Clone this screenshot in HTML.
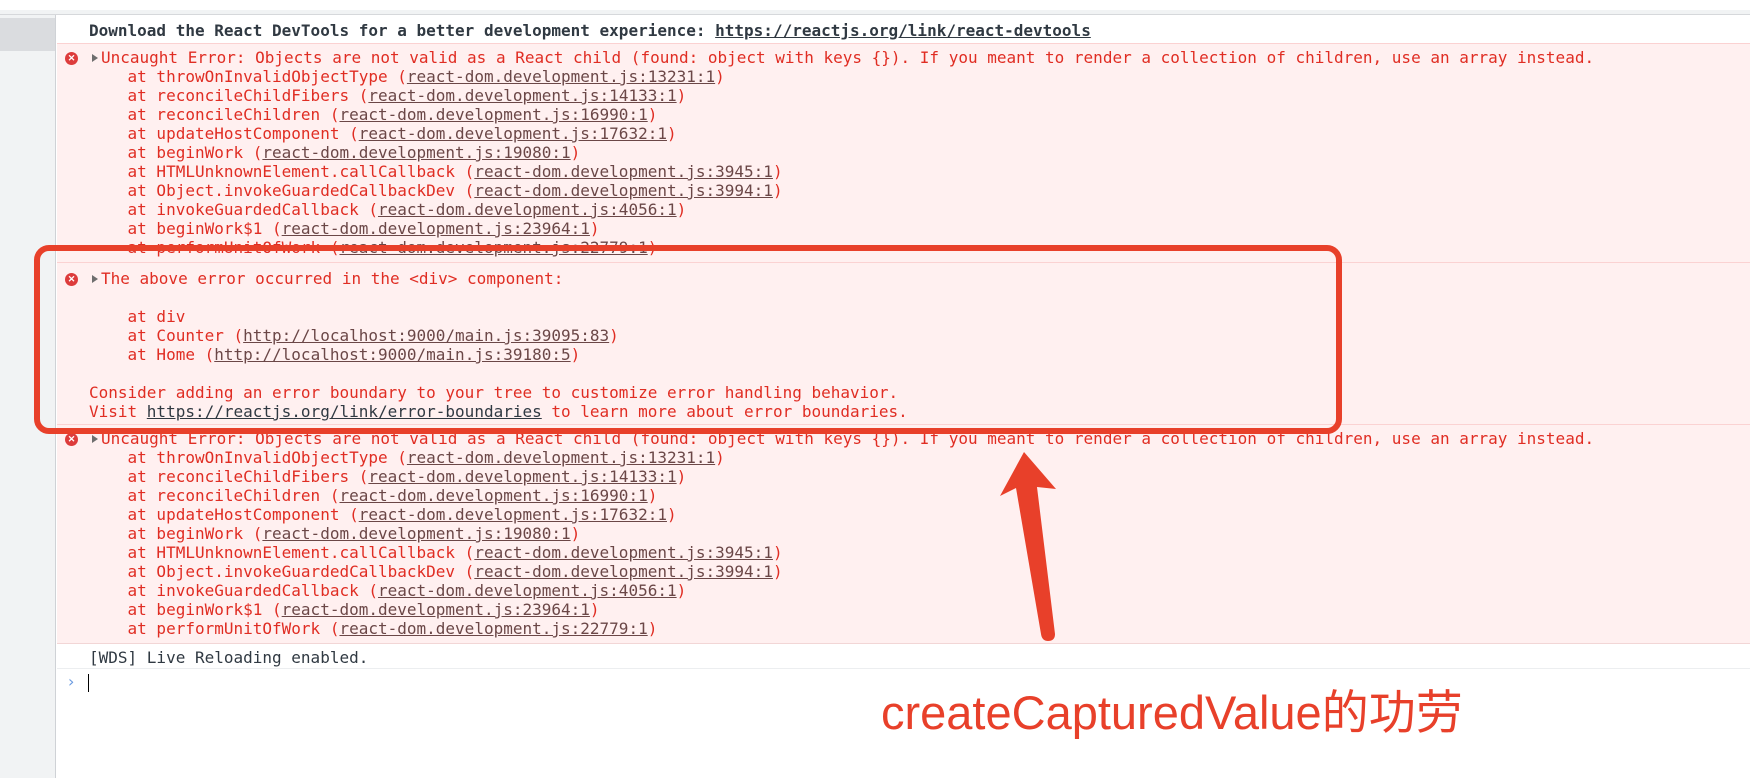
<!DOCTYPE html>
<html><head><meta charset="utf-8"><style>
*{margin:0;padding:0;box-sizing:border-box}
body{width:1750px;height:778px;overflow:hidden;background:#fff;position:relative;font-family:"DejaVu Sans Mono","Liberation Mono",monospace;font-size:16px}
.side{position:absolute;left:0;top:15px;width:56px;bottom:0;background:#f1f3f4;border-right:1px solid #cfd2d6}
.blk{position:absolute;left:0;top:3px;width:55px;height:33px;background:#dadcdf}
.topband{position:absolute;left:0;top:10px;width:1750px;height:5px;background:#f1f3f4;border-bottom:1px solid #d6d8db}
.row{position:absolute;left:57px;right:0;overflow:hidden}
.err{background:#fff0f0;border-top:1px solid #fbd2d2;color:#e02d23}
.l{height:19px;line-height:19px;white-space:pre;padding-left:32px}
.f{padding-left:44px}
.l a{color:#6b4747;text-decoration:underline}
.ic{position:absolute;left:8px;width:13px;height:13px;border-radius:50%;background:#dd3c3c;color:#fff;font:bold 9px/13px "Liberation Sans",sans-serif;text-align:center}
.tri{position:absolute;left:35px;width:0;height:0;border-left:6px solid #6e6e6e;border-top:4px solid transparent;border-bottom:4px solid transparent}
</style></head><body>
<div class="topband"></div>
<div class="side"><div class="blk"></div></div>

<div class="row" style="top:16px;height:27px;padding-top:5px;color:#303942;font-weight:bold">
<div class="l">Download the React DevTools for a better development experience: <a style="color:#303942">https://reactjs.org/link/react-devtools</a></div></div>

<div class="row err" style="top:43px;height:219px;padding-top:4px">
<div class="ic" style="top:8px">✕</div><div class="tri" style="top:10px"></div>
<div class="l f">Uncaught Error: Objects are not valid as a React child (found: object with keys {}). If you meant to render a collection of children, use an array instead.</div>
<div class="l">    at throwOnInvalidObjectType (<a>react-dom.development.js:13231:1</a>)</div>
<div class="l">    at reconcileChildFibers (<a>react-dom.development.js:14133:1</a>)</div>
<div class="l">    at reconcileChildren (<a>react-dom.development.js:16990:1</a>)</div>
<div class="l">    at updateHostComponent (<a>react-dom.development.js:17632:1</a>)</div>
<div class="l">    at beginWork (<a>react-dom.development.js:19080:1</a>)</div>
<div class="l">    at HTMLUnknownElement.callCallback (<a>react-dom.development.js:3945:1</a>)</div>
<div class="l">    at Object.invokeGuardedCallbackDev (<a>react-dom.development.js:3994:1</a>)</div>
<div class="l">    at invokeGuardedCallback (<a>react-dom.development.js:4056:1</a>)</div>
<div class="l">    at beginWork$1 (<a>react-dom.development.js:23964:1</a>)</div>
<div class="l">    at performUnitOfWork (<a>react-dom.development.js:22779:1</a>)</div>
</div>

<div class="row err" style="top:262px;height:162px;padding-top:6px">
<div class="ic" style="top:10px">✕</div><div class="tri" style="top:12px"></div>
<div class="l f">The above error occurred in the &lt;div&gt; component:</div>
<div class="l"> </div>
<div class="l">    at div</div>
<div class="l">    at Counter (<a>http://localhost:9000/main.js:39095:83</a>)</div>
<div class="l">    at Home (<a>http://localhost:9000/main.js:39180:5</a>)</div>
<div class="l"> </div>
<div class="l">Consider adding an error boundary to your tree to customize error handling behavior.</div>
<div class="l">Visit <a style="color:#303942">https://reactjs.org/link/error-boundaries</a> to learn more about error boundaries.</div>
</div>

<div class="row err" style="top:424px;height:219px;padding-top:4px">
<div class="ic" style="top:8px">✕</div><div class="tri" style="top:10px"></div>
<div class="l f">Uncaught Error: Objects are not valid as a React child (found: object with keys {}). If you meant to render a collection of children, use an array instead.</div>
<div class="l">    at throwOnInvalidObjectType (<a>react-dom.development.js:13231:1</a>)</div>
<div class="l">    at reconcileChildFibers (<a>react-dom.development.js:14133:1</a>)</div>
<div class="l">    at reconcileChildren (<a>react-dom.development.js:16990:1</a>)</div>
<div class="l">    at updateHostComponent (<a>react-dom.development.js:17632:1</a>)</div>
<div class="l">    at beginWork (<a>react-dom.development.js:19080:1</a>)</div>
<div class="l">    at HTMLUnknownElement.callCallback (<a>react-dom.development.js:3945:1</a>)</div>
<div class="l">    at Object.invokeGuardedCallbackDev (<a>react-dom.development.js:3994:1</a>)</div>
<div class="l">    at invokeGuardedCallback (<a>react-dom.development.js:4056:1</a>)</div>
<div class="l">    at beginWork$1 (<a>react-dom.development.js:23964:1</a>)</div>
<div class="l">    at performUnitOfWork (<a>react-dom.development.js:22779:1</a>)</div>
</div>

<div class="row" style="top:643px;height:26px;padding-top:4px;border-top:1px solid #f2d6d6;border-bottom:1px solid #eceef0;color:#303942">
<div class="l">[WDS] Live Reloading enabled.</div></div>

<div class="row" style="top:670px;height:26px">
<span style="position:absolute;left:11px;top:2px;color:#6b9be0;font:16px 'DejaVu Sans',sans-serif">›</span>
<span style="position:absolute;left:31px;top:4px;width:1px;height:18px;background:#000"></span>
</div>

<svg style="position:absolute;left:0;top:0" width="1750" height="778">
<rect x="37" y="248" width="1302" height="183" rx="12" ry="12" fill="none" stroke="#e8402a" stroke-width="6"/>
<path d="M1024,452 L1056,489 L1037,487 L1055,634 Q1055,641 1048,641 Q1042,641 1041,634 L1016,488 L1000,496 Z" fill="#e8402a"/>
</svg>
<div style="position:absolute;left:881px;top:674px;font:47px 'Liberation Sans','Noto Sans CJK SC',sans-serif;color:#e8402a;white-space:nowrap">createCapturedValue的功劳</div>
</body></html>
